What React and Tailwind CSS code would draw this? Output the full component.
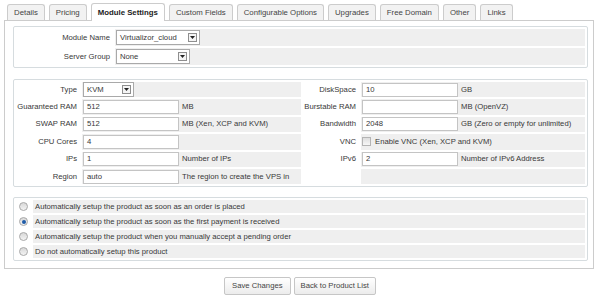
import React from "react";

/* ------------------------------ small controls ------------------------------ */

function Select({ value, width }) {
  return (
    <div
      className={`flex items-center justify-between h-[15px] border border-[#a9a9a9] bg-white pl-[3px] pr-[2px] ${width}`}
    >
      <span>{value}</span>
      <span className="flex items-center justify-center w-[9px] h-[9px] border border-[#8e8e8e] bg-[#f4f4f4]">
        <svg width="5" height="3" viewBox="0 0 5 3">
          <path d="M0 0h5L2.5 3z" fill="#222" />
        </svg>
      </span>
    </div>
  );
}

function Input({ value = "", width = "w-[96px]" }) {
  return (
    <div className={`h-[14px] border border-[#c4c4c4] bg-white pl-[3px] leading-[12px] ${width}`}>
      {value}
    </div>
  );
}

function Radio({ checked }) {
  return (
    <span className="flex items-center justify-center w-[9px] h-[9px] rounded-full border border-[#a8a8a8] bg-gradient-to-b from-[#d8d8d8] to-[#f4f4f4]">
      {checked && <span className="w-[4px] h-[4px] rounded-full bg-[#1f5ca8]" />}
    </span>
  );
}

function Field({ value, unit }) {
  return (
    <div className="flex items-center gap-[3px]">
      <Input value={value} />
      {unit && <span>{unit}</span>}
    </div>
  );
}

/* ---------------------------------- data ---------------------------------- */

const tabs = [
  "Details",
  "Pricing",
  "Module Settings",
  "Custom Fields",
  "Configurable Options",
  "Upgrades",
  "Free Domain",
  "Other",
  "Links",
];

const rows = [
  {
    l1: "Type",
    f1: <Select value="KVM" width="w-[51px]" />,
    l2: "DiskSpace",
    f2: <Field value="10" unit="GB" />,
  },
  {
    l1: "Guaranteed RAM",
    f1: <Field value="512" unit="MB" />,
    l2: "Burstable RAM",
    f2: <Field value="" unit="MB (OpenVZ)" />,
  },
  {
    l1: "SWAP RAM",
    f1: <Field value="512" unit="MB (Xen, XCP and KVM)" />,
    l2: "Bandwidth",
    f2: <Field value="2048" unit="GB (Zero or empty for unlimited)" />,
  },
  {
    l1: "CPU Cores",
    f1: <Field value="4" />,
    l2: "VNC",
    f2: (
      <div className="flex items-center gap-[4px]">
        <span className="w-[9px] h-[9px] border border-[#b4b4b4] bg-gradient-to-b from-[#dedede] to-[#f6f6f6]" />
        <span>Enable VNC (Xen, XCP and KVM)</span>
      </div>
    ),
  },
  {
    l1: "IPs",
    f1: <Field value="1" unit="Number of IPs" />,
    l2: "IPv6",
    f2: <Field value="2" unit="Number of IPv6 Address" />,
  },
  {
    l1: "Region",
    f1: <Field value="auto" unit="The region to create the VPS in" />,
    l2: "",
    f2: null,
  },
];

const setupOptions = [
  "Automatically setup the product as soon as an order is placed",
  "Automatically setup the product as soon as the first payment is received",
  "Automatically setup the product when you manually accept a pending order",
  "Do not automatically setup this product",
];

/* ---------------------------------- page ---------------------------------- */

export default function App() {
  return (
    <div
      className="w-[600px] h-[298px] bg-white text-[#383838] text-[7.7px] leading-[10px] pt-[3px] pl-[4px] overflow-hidden"
      style={{ fontFamily: '"Liberation Sans", Arial, sans-serif' }}
    >
      {/* tabs */}
      <div className="flex gap-[4px] pl-[3px] relative z-10">
        {tabs.map((t) => {
          const active = t === "Module Settings";
          return (
            <div
              key={t}
              className={`flex items-center px-[6px] border border-[#cccccc] border-b-0 rounded-t-[3px] text-[7.8px] ${
                active
                  ? "h-[18px] bg-white font-bold text-[#222] -mb-px"
                  : "h-[16px] mt-[1px] bg-[#f2f2f2] text-[#444]"
              }`}
            >
              {t}
            </div>
          );
        })}
      </div>

      {/* panel */}
      <div className="w-[590px] h-[249px] border border-[#cccccc] pt-[5px] pl-[8px]">
        {/* module */}
        <div className="w-[575px] border border-[#d6dcdf] rounded-[2px]">
          <table className="w-full border-separate border-spacing-[2px]">
            <tbody>
              <tr>
                <td className="w-[97px] h-[17px] p-0 bg-white text-right pr-[3px]">Module Name</td>
                <td className="p-0 bg-[#efefef] pl-[1px]">
                  <Select value="Virtualizor_cloud" width="w-[84px]" />
                </td>
              </tr>
              <tr>
                <td className="h-[17px] p-0 bg-white text-right pr-[3px]">Server Group</td>
                <td className="p-0 bg-[#efefef] pl-[1px]">
                  <Select value="None" width="w-[74px]" />
                </td>
              </tr>
            </tbody>
          </table>
        </div>

        {/* module options */}
        <div className="w-[575px] mt-[11px] border border-[#d6dcdf] rounded-[2px]">
          <table className="w-full border-separate border-spacing-[2px]">
            <tbody>
              {rows.map((r) => (
                <tr key={r.l1}>
                  <td className="w-[64px] h-[15.4px] p-0 bg-white text-right pr-[3px] whitespace-nowrap">{r.l1}</td>
                  <td className="w-[219px] p-0 bg-[#efefef] pl-[1px]">{r.f1}</td>
                  <td className="w-[56px] p-0 bg-white text-right pr-[3px] whitespace-nowrap">{r.l2}</td>
                  <td className="p-0 bg-[#efefef] pl-[1px]">{r.f2}</td>
                </tr>
              ))}
            </tbody>
          </table>
        </div>

        {/* auto setup */}
        <div className="w-[575px] mt-[10px] border border-[#d6dcdf] rounded-[2px]">
          <table className="w-full border-separate border-spacing-[2px]">
            <tbody>
              {setupOptions.map((o, i) => (
                <tr key={o}>
                  <td className="w-[15px] h-[13px] p-0 bg-white">
                    <div className="flex justify-center">
                      <Radio checked={i === 1} />
                    </div>
                  </td>
                  <td className="p-0 bg-[#efefef] pl-[2px]">{o}</td>
                </tr>
              ))}
            </tbody>
          </table>
        </div>
      </div>

      {/* actions */}
      <div className="flex justify-center gap-[3px] mt-[8px] pr-[4px]">
        <button
          type="button"
          className="h-[18px] px-[7px] border border-[#c6c6c6] rounded-[2px] bg-gradient-to-b from-white to-[#ececec] text-[#444]"
        >
          Save Changes
        </button>
        <button
          type="button"
          className="h-[18px] px-[6px] border border-[#c6c6c6] rounded-[2px] bg-gradient-to-b from-white to-[#ececec] text-[#444]"
        >
          Back to Product List
        </button>
      </div>
    </div>
  );
}
